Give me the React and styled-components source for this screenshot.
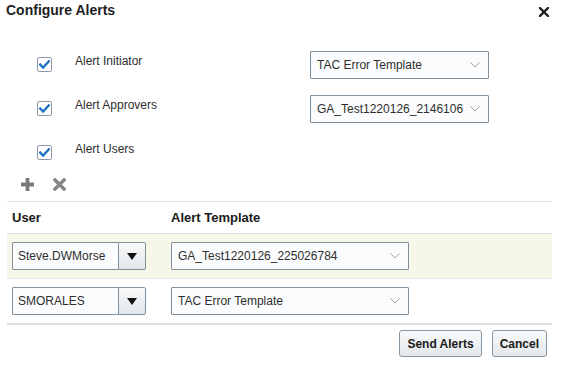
import React from "react";
import styled, { createGlobalStyle } from "styled-components";

const GlobalStyle = createGlobalStyle`
  html, body {
    margin: 0;
    padding: 0;
    background: #ffffff;
  }
  body {
    font-family: "Liberation Sans", Arial, sans-serif;
    font-size: 12px;
    color: #333333;
  }
`;

const Dialog = styled.div`
  width: 561px;
  height: 388px;
  box-sizing: border-box;
  background: #ffffff;
`;

const TitleBar = styled.div`
  display: flex;
  justify-content: space-between;
  align-items: flex-start;
  padding: 2px 12px 0 6px;
  height: 18px;
  box-sizing: border-box;
`;

const Title = styled.h1`
  margin: 0;
  font-size: 14px;
  line-height: 16px;
  font-weight: bold;
  color: #1f1f1f;
`;

const CloseButton = styled.button`
  border: none;
  background: none;
  padding: 0;
  margin-top: 5px;
  width: 10px;
  height: 10px;
  display: block;
  cursor: pointer;
  svg {
    display: block;
  }
`;

const OptionList = styled.div`
  display: flex;
  flex-direction: column;
  margin-top: 25px;
`;

const OptionRow = styled.div`
  display: grid;
  grid-template-columns: 38px 235px 179px;
  align-items: start;
  height: 44px;
  padding-left: 37px;
`;

const CheckBox = styled.span`
  width: 15px;
  height: 15px;
  box-sizing: border-box;
  margin-top: 14px;
  border: 1px solid #8d9aa6;
  border-radius: 2px;
  background: #ffffff;
  display: flex;
  align-items: center;
  justify-content: center;
`;

const OptionLabel = styled.span`
  margin-top: 11px;
  line-height: 14px;
  color: #2e2e2e;
`;

const Select = styled.div`
  box-sizing: border-box;
  width: ${(p) => p.$width}px;
  height: 28px;
  border: 1px solid #7f8f9b;
  border-radius: 1px;
  background: #fbfcfe;
  display: flex;
  align-items: center;
  justify-content: space-between;
  padding: 0 8px 0 6px;
  color: #2e2e2e;
  white-space: nowrap;
`;

const OptionSelect = styled(Select)`
  margin-top: 8px;
`;

const Toolbar = styled.div`
  display: flex;
  gap: 19px;
  height: 26px;
  box-sizing: border-box;
  padding: 3px 0 0 21px;
`;

const IconButton = styled.button`
  border: none;
  background: none;
  padding: 0;
  width: 13px;
  height: 13px;
  cursor: pointer;
  svg {
    display: block;
  }
`;

const Grid = styled.table`
  width: 545px;
  margin: 0 7px;
  border-collapse: collapse;
  border-top: 1px solid #dde2e6;
  table-layout: fixed;
`;

const HeadCell = styled.th`
  text-align: left;
  font-size: 13px;
  line-height: 15px;
  font-weight: bold;
  color: #1a1a1a;
  padding: 8px 5px;
  border-bottom: 1px solid #d8dee2;
  width: ${(p) => (p.$width ? `${p.$width - 10}px` : "auto")};
`;

const Row = styled.tr`
  background: ${(p) => (p.$highlight ? "#f6f7e8" : "#ffffff")};
  border-bottom: ${(p) => (p.$last ? "2px solid #dcdfe2" : "1px solid #e8ebed")};
`;

const Cell = styled.td`
  padding: 8px 5px;
  vertical-align: top;
  height: 28px;
`;

const Combo = styled.div`
  display: flex;
  width: 134px;
  height: 28px;
`;

const ComboInput = styled.div`
  box-sizing: border-box;
  width: 106px;
  height: 28px;
  border: 1px solid #7f8f9b;
  border-right: none;
  border-radius: 2px 0 0 2px;
  background: #fbfcfe;
  padding-left: 5px;
  display: flex;
  align-items: center;
  color: #2e2e2e;
  white-space: nowrap;
`;

const ComboButton = styled.button`
  box-sizing: border-box;
  width: 28px;
  height: 28px;
  border: 1px solid #7f8f9b;
  border-radius: 0 2px 2px 0;
  background: linear-gradient(#f9fafb, #e2e6e9);
  padding: 0;
  display: flex;
  align-items: center;
  justify-content: center;
  cursor: pointer;
`;

const Footer = styled.div`
  display: flex;
  justify-content: flex-end;
  gap: 10px;
  padding: 5px 14px 0 0;
`;

const Button = styled.button`
  height: 27px;
  padding: 0 7px;
  border: 1px solid #8797a3;
  border-radius: 3px;
  background: linear-gradient(#f8f9fa, #e4e8eb);
  font-family: "Liberation Sans", Arial, sans-serif;
  font-size: 12px;
  font-weight: bold;
  color: #1a1a1a;
  cursor: pointer;
`;

const Check = () => (
  <svg width="13" height="13" viewBox="0 0 13 13">
    <path d="M2.2 6.6 L5.1 9.5 L10.8 3.4" fill="none" stroke="#1c6fc2" strokeWidth="2.3" strokeLinecap="square" />
  </svg>
);

const Chevron = () => (
  <svg width="10" height="6" viewBox="0 0 10 6">
    <path d="M0.5 0.5 L5 5 L9.5 0.5" fill="none" stroke="#a3a3a3" strokeWidth="1" />
  </svg>
);

const DownTriangle = () => (
  <svg width="10" height="7" viewBox="0 0 10 7">
    <path d="M0 0 H10 L5 7 Z" fill="#111111" />
  </svg>
);

const options = [
  { label: "Alert Initiator", template: "TAC Error Template" },
  { label: "Alert Approvers", template: "GA_Test1220126_2146106" },
  { label: "Alert Users" },
];

const rows = [
  { user: "Steve.DWMorse", template: "GA_Test1220126_225026784" },
  { user: "SMORALES", template: "TAC Error Template" },
];

export default function App() {
  return (
    <>
      <GlobalStyle />
      <Dialog>
        <TitleBar>
          <Title>Configure Alerts</Title>
          <CloseButton aria-label="Close">
            <svg width="10" height="10" viewBox="0 0 10 10">
              <path d="M1 1 L9 9 M9 1 L1 9" stroke="#1f1f1f" strokeWidth="2.4" strokeLinecap="square" />
            </svg>
          </CloseButton>
        </TitleBar>

        <OptionList>
          {options.map((o) => (
            <OptionRow key={o.label}>
              <CheckBox role="checkbox" aria-checked="true">
                <Check />
              </CheckBox>
              <OptionLabel>{o.label}</OptionLabel>
              {o.template ? (
                <OptionSelect $width={179}>
                  <span>{o.template}</span>
                  <Chevron />
                </OptionSelect>
              ) : (
                <span />
              )}
            </OptionRow>
          ))}
        </OptionList>

        <Toolbar>
          <IconButton aria-label="Add">
            <svg width="13" height="13" viewBox="0 0 13 13">
              <path d="M4.6 0 H8.4 V4.6 H13 V8.4 H8.4 V13 H4.6 V8.4 H0 V4.6 H4.6 Z" fill="#7a7a7a" />
            </svg>
          </IconButton>
          <IconButton aria-label="Remove">
            <svg width="13" height="13" viewBox="0 0 13 13">
              <path d="M2 2 L11 11 M11 2 L2 11" stroke="#858585" strokeWidth="3.4" strokeLinecap="square" />
            </svg>
          </IconButton>
        </Toolbar>

        <Grid>
          <thead>
            <tr>
              <HeadCell $width={159}>User</HeadCell>
              <HeadCell $width={249}>Alert Template</HeadCell>
              <HeadCell />
            </tr>
          </thead>
          <tbody>
            {rows.map((r, i) => (
              <Row key={r.user} $highlight={i === 0} $last={i === rows.length - 1}>
                <Cell>
                  <Combo>
                    <ComboInput>{r.user}</ComboInput>
                    <ComboButton aria-label="Choose user">
                      <DownTriangle />
                    </ComboButton>
                  </Combo>
                </Cell>
                <Cell>
                  <Select $width={238}>
                    <span>{r.template}</span>
                    <Chevron />
                  </Select>
                </Cell>
                <Cell />
              </Row>
            ))}
          </tbody>
        </Grid>

        <Footer>
          <Button>Send Alerts</Button>
          <Button>Cancel</Button>
        </Footer>
      </Dialog>
    </>
  );
}
